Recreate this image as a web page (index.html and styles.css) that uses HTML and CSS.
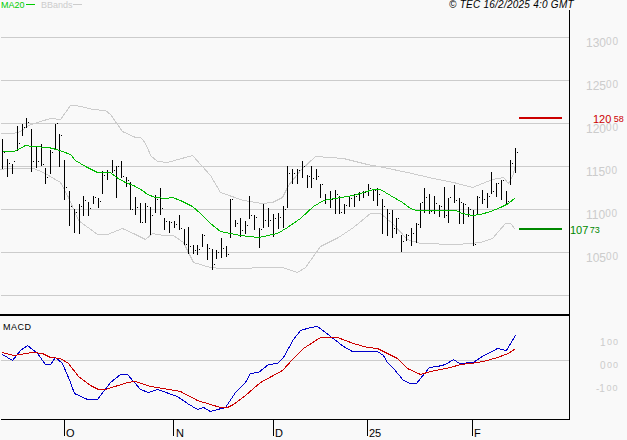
FILE: index.html
```html
<!DOCTYPE html>
<html lang="en">
<head>
<meta charset="utf-8">
<title>Chart</title>
<link rel="stylesheet" href="styles.css">
</head>
<body>
<svg class="chart" width="627" height="440" viewBox="0 0 627 440" xmlns="http://www.w3.org/2000/svg">
  <g class="px">
    <path class="grid" d="M0 37H569M0 80H569M0 123H569M0 166H569M0 209H569M0 252H569M0 295H569M0 360H569"/>
    <path class="band" d="M0 133H13L20 131L28 125L40 121L50 118L60 119L70 105H75L85 107L92 109L105 110L110 114L117 124L122 131L135 137H140L143 140L147 147L150 155L157 161L167 162L192 155L210 175L220 192L243 200L262 203L272 202L282 197L288 185L300 170L315 156L343 158L367 164L383 167L407 172L420 175L433 178L453 182L472 187L492 179L503 177L508 183L512 176L515 165"/>
    <path class="band" d="M0 169L7 168H33L43 172L60 182L68 197L78 220L97 234H107L122 228L133 233L145 239L152 233L163 235H173L183 242L193 262L210 267L220 268L243 268L260 267H282L297 272L305 267L320 246L338 237L353 227L370 213H380L392 223L407 239L420 243L457 244L480 242L492 238L505 223H510L515 229"/>
    <path class="bars" d="M2 138V168M1 158h1M3 152h1M7 158V176M6 170h1M8 163h1M12 163V173M11 168h1M13 161h1M17 125V150M16 130h1M18 143h1M22 123V135M21 131h1M23 127h1M26 117V127M25 125h1M27 122h1M31 128V171M30 160h1M32 161h1M36 145V167M35 161h1M37 161h1M41 143V165M40 153h1M42 164h1M45 167V183M44 182h1M46 177h1M50 149V173M49 172h1M51 152h1M55 123V149M54 147h1M56 123h1M59 133V166M58 164h1M60 135h1M64 159V199M63 187h1M65 187h1M69 190V225M68 192h1M70 206h1M74 208V232M73 231h1M75 212h1M79 203V233M78 232h1M80 206h1M83 195V215M82 208h1M84 200h1M88 201V215M87 209h1M89 208h1M93 195V203M92 200h1M94 197h1M98 197V207M97 199h1M99 201h1M102 170V193M101 182h1M103 175h1M107 169V179M106 176h1M108 172h1M112 159V172M111 170h1M113 170h1M116 165V197M115 193h1M117 166h1M121 160V177M120 177h1M122 176h1M126 176V186M125 182h1M127 180h1M130 181V209M129 190h1M131 209h1M135 196V214M134 209h1M136 207h1M140 202V222M139 206h1M141 222h1M145 202V222M144 221h1M146 206h1M150 206V234M149 225h1M151 215h1M155 194V212M154 210h1M156 199h1M160 187V214M159 193h1M161 208h1M164 217V229M163 220h1M165 221h1M169 220V232M168 226h1M170 222h1M174 220V227M173 225h1M175 224h1M179 214V229M178 226h1M180 228h1M184 229V244M183 229h1M185 244h1M188 226V253M187 230h1M189 246h1M193 244V253M192 250h1M194 250h1M197 244V254M196 250h1M198 249h1M202 233V246M201 245h1M203 235h1M207 243V259M206 246h1M208 248h1M212 248V269M211 263h1M213 264h1M216 249V258M215 255h1M217 252h1M221 237V257M220 255h1M222 248h1M226 245V256M225 255h1M227 254h1M230 198V237M229 234h1M231 199h1M235 219V226M234 224h1M236 223h1M240 217V236M239 234h1M241 230h1M245 220V233M244 232h1M246 225h1M249 195V218M248 217h1M250 215h1M254 214V229M253 227h1M255 217h1M259 227V247M258 233h1M260 229h1M263 203V227M262 226h1M264 220h1M268 207V226M267 225h1M269 220h1M273 213V236M272 235h1M274 218h1M278 212V228M277 226h1M279 217h1M283 205V227M282 226h1M284 209h1M287 165V207M286 206h1M288 173h1M292 168V183M291 175h1M293 173h1M297 168V183M296 173h1M298 170h1M302 160V177M301 175h1M303 166h1M307 174V187M306 186h1M308 176h1M311 165V187M310 186h1M312 178h1M316 168V179M315 177h1M317 176h1M320 183V197M319 193h1M321 184h1M325 193V203M324 198h1M326 199h1M330 190V207M329 205h1M331 199h1M335 189V213M334 211h1M336 194h1M339 195V213M338 200h1M340 212h1M344 203V213M343 206h1M345 205h1M349 195V206M348 205h1M350 198h1M354 193V206M353 201h1M355 196h1M359 191V200M358 196h1M360 193h1M363 190V197M362 196h1M364 192h1M368 183V195M367 190h1M369 188h1M373 188V200M372 190h1M374 190h1M377 187V205M376 190h1M378 194h1M382 198V233M381 216h1M383 206h1M387 208V235M386 234h1M388 213h1M392 209V237M391 220h1M393 228h1M396 217V233M395 231h1M397 218h1M401 234V251M400 235h1M402 241h1M406 233V240M405 238h1M407 235h1M411 227V245M410 244h1M412 233h1M416 222V242M415 232h1M417 224h1M420 202V227M419 210h1M421 202h1M424 187V212M423 197h1M425 197h1M429 193V213M428 196h1M430 211h1M434 195V213M433 212h1M435 203h1M439 204V216M438 212h1M440 206h1M444 186V217M443 204h1M445 215h1M448 197V222M447 221h1M449 197h1M454 184V202M453 200h1M455 200h1M459 197V223M458 222h1M460 202h1M463 202V223M462 221h1M464 204h1M468 206V216M467 212h1M469 209h1M473 209V245M472 234h1M474 244h1M477 195V213M476 210h1M478 197h1M482 189V203M481 199h1M483 199h1M487 192V207M486 201h1M488 196h1M491 171V193M490 191h1M492 191h1M496 182V196M495 190h1M497 183h1M501 179V199M500 198h1M502 180h1M506 190V203M505 200h1M507 201h1M510 159V184M509 183h1M511 163h1M515 147V172M514 171h1M516 152h1"/>
    <path class="ma" d="M2 151H13L18 149L25 145L32 146L48 147L56 149L62 151L70 154L75 160L85 166L97 172H110L116 177L125 182L133 185L142 190L147 194L155 197L165 198L172 197L180 200L192 206L200 213L210 223L220 231L240 235L258 237L277 233L287 227L300 218L313 206L323 200L340 197L353 195L373 189H380L390 195L402 202L410 208L416 210H455L462 213L472 215L480 214L490 211L500 207L508 203L515 197"/>
    <path class="blue" d="M2 354L12 360L20 350L27 345L37 353L45 364H50L55 357L62 363L70 382L74 393L87 399H97L110 382L120 374H127L140 389L148 392L157 389L177 396L187 403L197 409L203 407L210 411L217 409L225 407L235 392L245 382L250 373L258 372L268 364L277 363L283 357L293 339L300 330L310 327L317 326L325 332L343 346L352 351H377L383 355L387 362L393 368L403 380L410 383H416L420 378L429 367L437 366L445 364L453 359L459 363L473 362L480 357L497 348L506 350L515 335"/>
    <path class="red" d="M2 352L13 355L32 352L42 353L50 357L60 358L68 363L78 376L90 385L98 389H105L127 382L135 381L150 386L163 388L180 391L197 400L210 404L220 407H227L233 404L245 395L260 382L282 370L293 358L303 348L320 337H337L353 343L367 347L377 348L397 358L407 368L420 374L430 371L450 367L460 364L470 363L483 361L497 357L508 353L515 348"/>
    <path class="legend-ma" d="M25 4H34"/>
    <path class="legend-band" d="M72 4H81"/>
    <path class="frame" d="M569 9V419H0M64 419V435M173 419V435M273 419V435M367 419V435M472 419V435"/>
  </g>
  <rect class="divider" x="0" y="314" width="570" height="2"/>
  <rect class="level-red" x="519" y="117" width="43" height="2"/>
  <rect class="level-green" x="519" y="228" width="43" height="2"/>

  <text class="t-legend c-ma" x="1" y="8">MA20</text>
  <text class="t-legend c-band" x="41" y="8">BBands</text>
  <text class="t-copy" x="449" y="8">© TEC 16/2/2025 4:0 GMT</text>

  <text class="t-axis" x="586" y="47">130<tspan class="sup" dy="-2">00</tspan></text>
  <text class="t-axis" x="586" y="90">125<tspan class="sup" dy="-2">00</tspan></text>
  <text class="t-axis" x="586" y="133">120<tspan class="sup" dy="-2">00</tspan></text>
  <text class="t-axis" x="586" y="176">115<tspan class="sup" dy="-2">00</tspan></text>
  <text class="t-axis" x="586" y="219">110<tspan class="sup" dy="-2">00</tspan></text>
  <text class="t-axis" x="586" y="262">105<tspan class="sup" dy="-2">00</tspan></text>

  <text class="t-price c-red" x="593" y="123">120<tspan class="sup-price" dx="2.5" dy="-1">58</tspan></text>
  <text class="t-price c-green" x="570" y="234">107<tspan class="sup-price" dx="1.5" dy="-1">73</tspan></text>

  <text class="t-macd-axis" x="600" y="346">1<tspan class="sup-m" dx="1.5" dy="-1">00</tspan></text>
  <text class="t-macd-axis" x="600" y="369">0<tspan class="sup-m" dx="1.5" dy="-1">00</tspan></text>
  <text class="t-macd-axis" x="596" y="392">-1<tspan class="sup-m" dx="1.5" dy="-1">00</tspan></text>

  <text class="t-macd" x="3" y="330">MACD</text>
  <text class="t-date" x="66" y="437">O</text>
  <text class="t-date" x="176" y="437">N</text>
  <text class="t-date" x="275" y="437">D</text>
  <text class="t-date" x="369" y="437">25</text>
  <text class="t-date" x="474" y="437">F</text>
</svg>
</body>
</html>
```
FILE: styles.css
```css
html, body {
  margin: 0;
  padding: 0;
  background: #f9f9f9;
  overflow: hidden;
}
.chart {
  display: block;
  font-family: "Liberation Sans", Arial, sans-serif;
}
.px {
  transform: translate(0.5px, 0.5px);
  fill: none;
  stroke-width: 1;
  shape-rendering: crispEdges;
}
.grid { stroke: #cccccc; }
.band { stroke: #cccccc; }
.bars { stroke: #000000; }
.ma { stroke: #00bb00; }
.blue { stroke: #0000cc; }
.red { stroke: #cc0000; }
.legend-ma { stroke: #00cc00; }
.legend-band { stroke: #cccccc; }
.frame { stroke: #000000; }
.divider { fill: #000000; }
.level-red { fill: #cc0000; }
.level-green { fill: #008800; }

.t-legend { font-size: 9px; }
.c-ma { fill: #00cc00; }
.c-band { fill: #cccccc; }
.t-copy { font-size: 10px; font-style: italic; fill: #000000; letter-spacing: 0.25px; }
.t-axis { font-size: 12px; fill: #cccccc; }
.sup { font-size: 10px; letter-spacing: 0.8px; }
.t-price { font-size: 11px; }
.sup-price { font-size: 9px; }
.c-red { fill: #cc0000; }
.c-green { fill: #008800; }
.t-macd-axis { font-size: 10px; fill: #cccccc; text-anchor: start; }
.sup-m { font-size: 9px; letter-spacing: 1px; }
.t-macd { font-size: 9px; letter-spacing: 0.5px; fill: #000000; }
.t-date { font-size: 11px; fill: #000000; }
```
